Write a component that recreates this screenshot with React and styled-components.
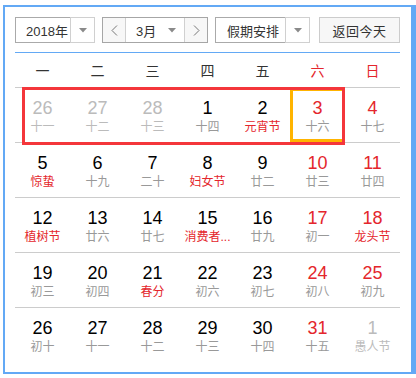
import React from "react";
import styled, { createGlobalStyle } from "styled-components";

const GlobalStyle = createGlobalStyle`
    html, body {
        margin: 0;
        padding: 0;
        background: #fff;
    }
    body {
        font-family: "Liberation Sans", "Noto Sans CJK SC", sans-serif;
        color: #333;
    }
`;

const Frame = styled.div`
    margin: 5px 0 0 3px;
    width: 413px;
    height: 369px;
    box-sizing: border-box;
    border: 2px solid #63a9f5;
    border-right-width: 5px;
    background: #fff;
    padding: 10px 11px 0 10px;
`;

const Toolbar = styled.div`
    display: flex;
    align-items: stretch;
    height: 26px;
    font-size: 13px;
    padding-bottom: 9px;
    border-bottom: 1px solid #63a9f5;
`;

const Select = styled.div`
    display: flex;
    height: 26px;
    margin-right: ${(p) => p.$gap || 7}px;
`;

const SelectText = styled.div`
    width: ${(p) => p.$w}px;
    box-sizing: border-box;
    border: 1px solid #aaa;
    border-right: none;
    padding-left: ${(p) => p.$pl || 10}px;
    display: flex;
    align-items: center;
    background: #fff;
    letter-spacing: ${(p) => p.$ls || 0}px;
`;

const SelectArrow = styled.div`
    width: 25px;
    box-sizing: border-box;
    border: 1px solid #d0d0d0;
    display: flex;
    align-items: center;
    justify-content: center;
    background: #fff;
`;

const MonthGroup = styled.div`
    display: flex;
    height: 26px;
    box-sizing: border-box;
    border: 1px solid #a6a6a6;
    margin-right: 7px;
`;

const NavButton = styled.div`
    width: 22px;
    background: #f7f7f7;
    display: flex;
    align-items: center;
    justify-content: center;
    border-left: ${(p) => (p.$right ? "1px solid #d0d0d0" : "none")};
    border-right: ${(p) => (p.$right ? "none" : "1px solid #d0d0d0")};
`;

const MonthSelect = styled.div`
    width: 58px;
    display: flex;
    align-items: center;
    justify-content: space-between;
    padding: 0 8px 0 10px;
    box-sizing: border-box;
    background: #fff;
`;

const TodayButton = styled.div`
    width: 81px;
    height: 26px;
    box-sizing: border-box;
    border: 1px solid #ccc;
    background: #f7f7f7;
    display: flex;
    align-items: center;
    justify-content: center;
    letter-spacing: 0.5px;
`;

const Header = styled.div`
    display: grid;
    grid-template-columns: repeat(7, 55px);
    height: 34px;
    border-bottom: 1px solid #ccc;
`;

const WeekName = styled.div`
    display: flex;
    align-items: center;
    justify-content: center;
    font-size: 14px;
    color: ${(p) => (p.$weekend ? "#e4262c" : "#333")};
`;

const WeekRow = styled.div`
    position: relative;
    display: grid;
    grid-template-columns: repeat(7, 55px);
    height: 54px;
    border-bottom: ${(p) => (p.$last ? "none" : "1px solid #ccc")};
`;

const WeekHighlight = styled.div`
    position: absolute;
    left: 7px;
    top: -1px;
    width: 323px;
    height: 58px;
    box-sizing: border-box;
    border: 3px solid #f4363b;
    pointer-events: none;
    z-index: 2;
`;

const DayCell = styled.div`
    box-sizing: border-box;
    padding-top: ${(p) => (p.$today ? 7 : 10)}px;
    border: ${(p) => (p.$today ? "3px solid #ffb400" : "none")};
    text-align: center;
`;

const dayColor = (p) => (p.$other ? "#bbb" : p.$weekend ? "#e4262c" : "#000");

const DayNum = styled.div`
    font-family: "Liberation Sans", sans-serif;
    font-size: 18px;
    line-height: 20px;
    color: ${dayColor};
`;

const Lunar = styled.div`
    margin-top: 1px;
    font-size: 12px;
    line-height: 16px;
    white-space: nowrap;
    color: ${(p) => (p.$other ? "#bbb" : p.$fest ? "#e4262c" : "#999")};
`;

const DownArrow = () => (
    <svg width="8" height="5" viewBox="0 0 8 5">
        <polygon points="0,0 8,0 4,4.5" fill="#8a8a8a" />
    </svg>
);

const Chevron = ({ right }) => (
    <svg width="7" height="11" viewBox="0 0 7 11">
        <polyline
            points={right ? "1,0.5 6,5.5 1,10.5" : "6,0.5 1,5.5 6,10.5"}
            fill="none"
            stroke="#777"
            strokeWidth="1"
        />
    </svg>
);

const weekNames = ["一", "二", "三", "四", "五", "六", "日"];

// [day, lunar, festival?, otherMonth?, today?]
const weeks = [
    [
        [26, "十一", 0, 1],
        [27, "十二", 0, 1],
        [28, "十三", 0, 1],
        [1, "十四"],
        [2, "元宵节", 1],
        [3, "十六", 0, 0, 1],
        [4, "十七"],
    ],
    [
        [5, "惊蛰", 1],
        [6, "十九"],
        [7, "二十"],
        [8, "妇女节", 1],
        [9, "廿二"],
        [10, "廿三"],
        [11, "廿四"],
    ],
    [
        [12, "植树节", 1],
        [13, "廿六"],
        [14, "廿七"],
        [15, "消费者...", 1],
        [16, "廿九"],
        [17, "初一"],
        [18, "龙头节", 1],
    ],
    [
        [19, "初三"],
        [20, "初四"],
        [21, "春分", 1],
        [22, "初六"],
        [23, "初七"],
        [24, "初八"],
        [25, "初九"],
    ],
    [
        [26, "初十"],
        [27, "十一"],
        [28, "十二"],
        [29, "十三"],
        [30, "十四"],
        [31, "十五"],
        [1, "愚人节", 0, 1],
    ],
];

export default function App() {
    return (
        <>
            <GlobalStyle />
            <Frame>
                <Toolbar>
                    <Select>
                        <SelectText $w={55}>2018年</SelectText>
                        <SelectArrow>
                            <DownArrow />
                        </SelectArrow>
                    </Select>
                    <MonthGroup>
                        <NavButton>
                            <Chevron />
                        </NavButton>
                        <MonthSelect>
                            <span>3月</span>
                            <DownArrow />
                        </MonthSelect>
                        <NavButton $right>
                            <Chevron right />
                        </NavButton>
                    </MonthGroup>
                    <Select $gap={9}>
                        <SelectText $w={70} $pl={11}>
                            假期安排
                        </SelectText>
                        <SelectArrow>
                            <DownArrow />
                        </SelectArrow>
                    </Select>
                    <TodayButton>返回今天</TodayButton>
                </Toolbar>

                <Header>
                    {weekNames.map((n, i) => (
                        <WeekName key={n} $weekend={i >= 5}>
                            {n}
                        </WeekName>
                    ))}
                </Header>

                {weeks.map((week, wi) => (
                    <WeekRow key={wi} $last={wi === weeks.length - 1}>
                        {wi === 0 && <WeekHighlight />}
                        {week.map(([d, lunar, fest, other, today], di) => (
                            <DayCell key={di} $today={!!today}>
                                <DayNum $other={!!other} $weekend={di >= 5}>
                                    {d}
                                </DayNum>
                                <Lunar $other={!!other} $fest={!!fest}>
                                    {lunar}
                                </Lunar>
                            </DayCell>
                        ))}
                    </WeekRow>
                ))}
            </Frame>
        </>
    );
}
